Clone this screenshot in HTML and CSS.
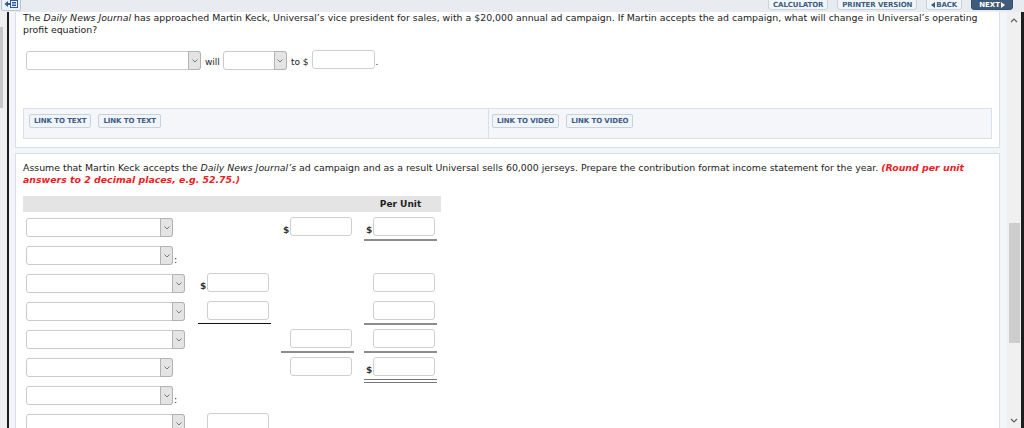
FILE: index.html
```html
<!DOCTYPE html>
<html lang="en">
<head>
    <meta charset="UTF-8">
    <title>Question</title>
    <link rel="stylesheet" href="styles.css">
</head>
<body>

    <!-- Top toolbar -->
    <div class="topbar">
        <span class="nav-toggle">
            <svg width="14" height="8" viewBox="0 0 14 8">
                <path d="M0.5 4 L4 1 L4 3 L6 3 L6 5 L4 5 L4 7 Z" fill="#2c5a96"/>
                <rect x="6.5" y="0.5" width="7" height="7" fill="none" stroke="#2c5a96"/>
                <path d="M8 2.5 H12 M8 4 H12 M8 5.5 H12" stroke="#2c5a96"/>
            </svg>
        </span>
        <div class="top-actions">
            <button class="tbtn">CALCULATOR</button>
            <button class="tbtn">PRINTER VERSION</button>
            <button class="tbtn"><svg width="4" height="6" viewBox="0 0 4 6"><path d="M4 0 L0 3 L4 6 Z" fill="#3c5c82"/></svg>BACK</button>
            <button class="tbtn next">NEXT<svg width="4" height="6" viewBox="0 0 4 6"><path d="M0 0 L4 3 L0 6 Z" fill="#fff"/></svg></button>
        </div>
    </div>

    <div class="frame">
        <div class="side-scroll"><span class="side-thumb"></span></div>
        <div class="rule"></div>

        <div class="content">

            <!-- Part 1 -->
            <div class="card card-first">
                <p class="q-text">The <i>Daily News Journal</i> has approached Martin Keck, Universal’s vice president for sales, with a $20,000 annual ad campaign. If Martin accepts the ad campaign, what will change in Universal’s operating profit equation?</p>

                <div class="answer-row">
                    <span class="dd-wrap"><select class="dd dd-wide"></select><span class="dd-arrow"><svg width="6" height="4" viewBox="0 0 6 4"><path d="M0.5 0.5 L3 3 L5.5 0.5" fill="none" stroke="#7a7a7a"/></svg></span></span>
                    <span class="word">will</span>
                    <span class="dd-wrap"><select class="dd dd-short"></select><span class="dd-arrow"><svg width="6" height="4" viewBox="0 0 6 4"><path d="M0.5 0.5 L3 3 L5.5 0.5" fill="none" stroke="#7a7a7a"/></svg></span></span>
                    <span class="word">to $</span>
                    <input class="num num-top" type="text">
                    <span class="word dot">.</span>
                </div>

                <div class="links">
                    <div class="links-left">
                        <button class="lbtn">LINK TO TEXT</button>
                        <button class="lbtn">LINK TO TEXT</button>
                    </div>
                    <div class="links-right">
                        <button class="lbtn">LINK TO VIDEO</button>
                        <button class="lbtn">LINK TO VIDEO</button>
                    </div>
                </div>
            </div>

            <!-- Part 2 -->
            <div class="card">
                <p class="q-text">Assume that Martin Keck accepts the <i>Daily News Journal’s</i> ad campaign and as a result Universal sells 60,000 jerseys. Prepare the contribution format income statement for the year. <b class="hint">(Round per unit answers to 2 decimal places, e.g. 52.75.)</b></p>

                <div class="stmt-head">
                    <span></span><span></span><span></span>
                    <span class="head-label">Per Unit</span>
                </div>

                <div class="stmt" id="stmt"></div>
            </div>

        </div>

        <div class="vscroll">
            <svg class="vs-up" width="8" height="5" viewBox="0 0 8 5"><path d="M1 4 L4 1 L7 4" fill="none" stroke="#606060" stroke-width="1.2"/></svg>
            <span class="vs-thumb"></span>
            <svg class="vs-down" width="8" height="5" viewBox="0 0 8 5"><path d="M1 1 L4 4 L7 1" fill="none" stroke="#606060" stroke-width="1.2"/></svg>
        </div>
        <div class="rule rule-right"></div>
    </div>

    <script>
        // rows: select size, colon, then 3 amount cells [dollar, line] or null
        const rows = [
            { size: 'sm', colon: false, cells: [null, { d: true, line: '' }, { d: true, line: 'line' }] },
            { size: 'sm', colon: true, cells: [null, null, null] },
            { size: 'lg', colon: false, cells: [{ d: true, line: '' }, null, { d: false, line: '' }] },
            { size: 'lg', colon: false, cells: [{ d: false, line: 'line-dark' }, null, { d: false, line: 'line' }] },
            { size: 'lg', colon: false, cells: [null, { d: false, line: 'line' }, { d: false, line: 'line' }] },
            { size: 'sm', colon: false, cells: [null, { d: false, line: '' }, { d: true, line: 'line-double' }] },
            { size: 'sm', colon: true, cells: [null, null, null] },
            { size: 'lg', colon: false, cells: [{ d: false, line: '' }, null, null] }
        ];

        const arrow = `<span class="dd-arrow"><svg width="6" height="4" viewBox="0 0 6 4"><path d="M0.5 0.5 L3 3 L5.5 0.5" fill="none" stroke="#7a7a7a"/></svg></span>`;

        const html = rows.map(r => {
            const label = `<div class="lbl"><span class="dd-wrap"><select class="dd dd-${r.size}"></select>${arrow}</span>${r.colon ? '<span class="colon">:</span>' : ''}</div>`;
            const cells = r.cells.map(c => {
                if (!c) return `<div class="amt-cell"></div>`;
                return `<div class="amt-cell"><span class="amt ${c.line}"><span class="cur">${c.d ? '$' : ''}</span><input class="num" type="text"></span></div>`;
            }).join("");
            return label + cells;
        }).join("");

        document.getElementById('stmt').innerHTML = html;
    </script>

</body>
</html>
```

FILE: styles.css
```css
* {
    margin: 0;
    padding: 0;
    box-sizing: border-box;
}

body {
    width: 1024px;
    height: 428px;
    overflow: hidden;
    font-family: "DejaVu Sans", Verdana, sans-serif;
    font-size: 9.4px;
    color: #222;
    background: #f3f6f9;
}

button, input, select {
    font-family: inherit;
}

/* Top toolbar */
.topbar {
    height: 12px;
    background: #e8ecf0;
    display: flex;
    justify-content: space-between;
    overflow: hidden;
}

.nav-toggle {
    display: flex;
    align-items: center;
    justify-content: center;
    width: 20px;
    height: 14px;
    margin: -3px 0 0 1px;
    background: #eef2f6;
    border: 1px solid #b8c5d3;
    border-radius: 2px;
}

.top-actions {
    display: flex;
    gap: 9px;
    margin-right: 11px;
}

.tbtn {
    display: flex;
    align-items: center;
    gap: 1px;
    height: 14px;
    margin-top: -4px;
    padding: 3px 4px 0;
    font-size: 7px;
    font-weight: bold;
    letter-spacing: -0.1px;
    color: #3c5c82;
    background: #f2f5f8;
    border: 1px solid #c9d3de;
    border-radius: 3px;
}

.tbtn.next {
    color: #fff;
    background: #3f5b79;
    border-color: #34506d;
    padding: 3px 7px 0;
    letter-spacing: 0;
}

/* Frame */
.frame {
    display: flex;
    height: 416px;
}

.side-scroll {
    width: 7px;
    background: #efefef;
    position: relative;
}

.side-thumb {
    position: absolute;
    left: 0;
    top: 15px;
    width: 3px;
    height: 81px;
    background: #c6c6c6;
}

.rule {
    width: 2px;
    background: #1d1d1d;
}

.rule-right {
    width: 3px;
}

.content {
    flex: 1;
    padding: 0 7px 0 6px;
    overflow: hidden;
}

.vscroll {
    width: 14px;
    background: #f0f0f0;
    display: flex;
    flex-direction: column;
    align-items: center;
}

.vs-up {
    margin-top: 6px;
}

.vs-thumb {
    width: 11px;
    height: 120px;
    margin-top: 200px;
    background: #cdcdcd;
}

.vs-down {
    margin-top: auto;
    margin-bottom: 5px;
}

/* Cards */
.card {
    background: #fff;
    border: 1px solid #d8e0e9;
    padding: 8px 7px 8px;
    margin-top: 5px;
}

.card-first {
    border-top: none;
    margin-top: 0;
    padding-top: 0;
}

.q-text {
    line-height: 12px;
}

.hint {
    color: #ee1c25;
    font-style: italic;
}

/* Question row */
.answer-row {
    display: flex;
    align-items: flex-end;
    margin-top: 15px;
    padding-left: 3px;
    height: 19px;
}

.word {
    font-size: 9px;
    line-height: 12px;
    padding-bottom: 2px;
    margin: 0 3px 0 4px;
}

.word.dot {
    margin: 0 0 0 1px;
}

.dd-wrap {
    position: relative;
    display: inline-block;
    height: 19px;
}

.dd {
    appearance: none;
    display: block;
    height: 19px;
    background: #fff;
    border: 1px solid #cacaca;
    border-radius: 3px;
}

.dd-wide { width: 175px; }
.dd-short { width: 64px; }
.dd-sm { width: 147px; }
.dd-lg { width: 159px; }

.dd-arrow {
    position: absolute;
    right: 0;
    top: 0;
    width: 13px;
    height: 19px;
    display: flex;
    align-items: center;
    justify-content: center;
    background: #e4e4e4;
    border: 1px solid #b2b2b2;
    border-radius: 0 3px 3px 0;
}

.num {
    width: 62px;
    height: 19px;
    border: 1px solid #cfcfcf;
    border-radius: 3px;
    background: #fff;
}

.num-top {
    width: 63px;
    margin-bottom: 1px;
}

/* Links */
.links {
    display: flex;
    height: 31px;
    margin-top: 38px;
    background: #f4f6f9;
    border: 1px solid #d9e0e8;
}

.links-left, .links-right {
    display: flex;
    align-items: flex-start;
    gap: 7px;
}

.links-left {
    width: 465px;
    padding: 5px 0 0 5px;
    border-right: 1px solid #d9e0e8;
}

.links-right {
    padding: 5px 0 0 3px;
}

.lbtn {
    height: 14px;
    padding: 0 4px;
    font-size: 7px;
    font-weight: bold;
    letter-spacing: -0.1px;
    color: #3b5b87;
    background: #f1f4f8;
    border: 1px solid #c8d2dd;
    border-radius: 2px;
}

/* Statement */
.stmt-head, .stmt {
    display: grid;
    grid-template-columns: 175px 83px 83px 77px;
}

.stmt-head {
    width: 418px;
    height: 16px;
    margin-top: 10px;
    background: #e4e4e4;
}

.head-label {
    width: 73px;
    text-align: center;
    font-size: 9px;
    font-weight: bold;
    line-height: 16px;
}

.stmt {
    grid-auto-rows: 28px;
    margin-top: 2px;
}

.lbl {
    display: flex;
    align-items: flex-end;
    padding: 4px 0 0 3px;
    height: 23px;
}

.colon {
    line-height: 10px;
    margin-left: 1px;
}

.amt-cell {
    padding-top: 3px;
}

.amt {
    display: inline-flex;
    align-items: flex-end;
    padding: 0 2px 3px;
    border-bottom: 2px solid transparent;
}

.cur {
    width: 7px;
    font-size: 9px;
    font-weight: bold;
    line-height: 9px;
    padding-bottom: 1px;
    color: #333;
}

.amt.line {
    border-bottom: 2px solid #8c8c8c;
}

.amt.line-dark {
    border-bottom: 1px solid #111;
}

.amt.line-double {
    border-bottom: 4px double #777;
}
```
